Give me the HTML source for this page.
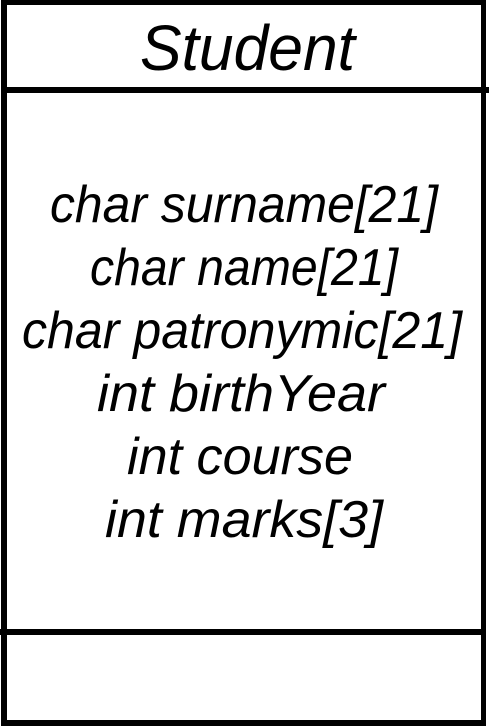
<!DOCTYPE html>
<html><head><meta charset="utf-8"><style>
html,body{margin:0;padding:0;background:#fff;width:489px;height:726px;overflow:hidden}
</style></head><body>
<svg width="489" height="726" viewBox="0 0 489 726" xmlns="http://www.w3.org/2000/svg">
<rect x="0" y="0" width="489" height="726" fill="#fff"/>
<rect x="1" y="0" width="6" height="726" fill="#000"/>
<rect x="481" y="0" width="5" height="726" fill="#000"/>
<rect x="1" y="0" width="485" height="5" fill="#000"/>
<rect x="1" y="720" width="485" height="6" fill="#000"/>
<rect x="1" y="87" width="488" height="6" fill="#000"/>
<rect x="0" y="629" width="486" height="6" fill="#000"/>
<g font-family="Liberation Sans, sans-serif" font-style="italic" fill="#000">
<text x="140" y="70" font-size="64" textLength="215" lengthAdjust="spacingAndGlyphs">Student</text>
<g font-size="52">
<text x="50" y="222" textLength="388" lengthAdjust="spacingAndGlyphs">char surname[21]</text>
<text x="90" y="285" textLength="308" lengthAdjust="spacingAndGlyphs">char name[21]</text>
<text x="22" y="348" textLength="440" lengthAdjust="spacingAndGlyphs">char patronymic[21]</text>
<text x="97" y="411" textLength="288" lengthAdjust="spacingAndGlyphs">int birthYear</text>
<text x="127" y="474" textLength="226" lengthAdjust="spacingAndGlyphs">int course</text>
<text x="105" y="537" textLength="278" lengthAdjust="spacingAndGlyphs">int marks[3]</text>
</g></g>
</svg>
</body></html>
